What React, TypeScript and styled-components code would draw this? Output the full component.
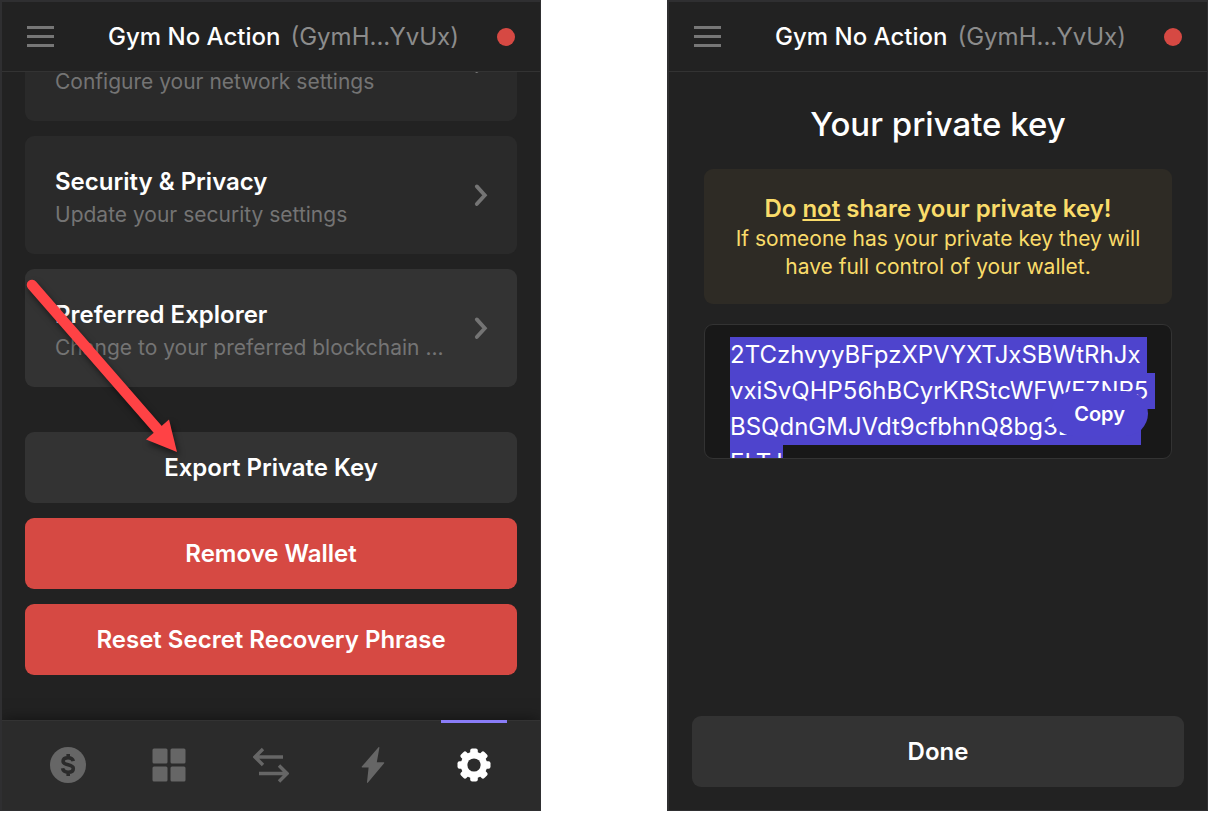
import React, { useEffect, useRef } from "react";
import styled, { createGlobalStyle } from "styled-components";

const GlobalStyle = createGlobalStyle`
  * { box-sizing: border-box; }
  body {
    margin: 0;
    background: #fff;
    color: #fff;
    font-family: Inter, "Liberation Sans", sans-serif;
  }
  h1, h2, p { margin: 0; }
  button { font-family: inherit; color: inherit; border: 0; cursor: pointer; }
`;

const Page = styled.main`
  display: grid;
  grid-template-columns: 1fr 1fr;
  gap: 126px;
  height: 100vh;
  min-height: 640px;
  padding: 0 7px 2px 0;
`;

const Panel = styled.section`
  position: relative;
  display: flex;
  flex-direction: column;
  min-width: 0;
  min-height: 0;
  overflow: hidden;
  background: #222;
  border: solid #2f2f31;
  border-width: 2px 1px 1px 2px;
`;

const Header = styled.header`
  display: flex;
  align-items: center;
  justify-content: space-between;
  flex: none;
  height: 70px;
  padding: 0 25px;
  border-bottom: 1px solid #333;
`;

const MenuButton = styled.button`
  display: flex;
  padding: 0;
  background: none;
  color: #777;
`;

const Account = styled.h1`
  display: flex;
  gap: 10px;
  padding-left: 16px;
  font-size: 24px;
  line-height: 30px;
  font-weight: 500;
  white-space: nowrap;
`;

const Address = styled.span`
  color: #8c8c8c;
  font-weight: 400;
`;

const StatusDot = styled.span`
  width: 18px;
  height: 18px;
  border-radius: 50%;
  background: #d64943;
`;

const Settings = styled.div`
  display: flex;
  flex-direction: column;
  justify-content: flex-end;
  gap: 15px;
  flex: 1;
  min-height: 0;
  padding: 0 23px 45px;
  overflow: hidden;
`;

const Card = styled.button<{ $active?: boolean }>`
  display: flex;
  align-items: center;
  justify-content: space-between;
  flex: none;
  height: 118px;
  padding: 0 28px 0 30px;
  border-radius: 9px;
  background: ${(p) => (p.$active ? "#333" : "#2a2a2a")};
  color: #747474;
  text-align: left;
`;

const CardText = styled.span`
  display: flex;
  flex-direction: column;
  gap: 4px;
  min-width: 0;
  padding-top: 5px;
`;

const CardTitle = styled.span`
  min-height: 30px;
  color: #fff;
  font-size: 24px;
  line-height: 30px;
  font-weight: 600;
`;

const CardNote = styled.span`
  font-size: 21px;
  line-height: 28px;
  font-weight: 400;
  white-space: nowrap;
`;

const Actions = styled.div`
  display: flex;
  flex-direction: column;
  gap: 15px;
  padding-top: 30px;
`;

const ActionButton = styled.button<{ $danger?: boolean }>`
  flex: none;
  height: 71px;
  padding: 0 20px;
  border-radius: 9px;
  background: ${(p) => (p.$danger ? "#d64943" : "#333")};
  font-size: 24px;
  line-height: 30px;
  font-weight: 600;
`;

const Nav = styled.nav`
  display: grid;
  grid-template-columns: repeat(5, 1fr);
  flex: none;
  height: 90px;
  padding: 0 15px;
  background: #2b2b2b;
  border-top: 1px solid #333;
  box-shadow: 0 0 15px rgba(0, 0, 0, 0.5);
`;

const NavButton = styled.button<{ $active?: boolean }>`
  position: relative;
  display: flex;
  align-items: center;
  justify-content: center;
  padding: 0 0 2px;
  background: none;
  color: ${(p) => (p.$active ? "#fff" : "#666")};
`;

const NavMarker = styled.span`
  position: absolute;
  top: -1px;
  left: 18px;
  right: 18px;
  height: 3px;
  background: #8a7df8;
`;

const Pointer = styled.svg`
  position: absolute;
  left: 18px;
  top: 268px;
  overflow: visible;
  pointer-events: none;
  filter: drop-shadow(2px 4px 3px rgba(0, 0, 0, 0.5));
`;

const KeyView = styled.div`
  display: flex;
  flex-direction: column;
  flex: 1;
  padding: 30px 23px 23px;
`;

const KeyContent = styled.div`
  display: flex;
  flex-direction: column;
  flex: 1;
  gap: 20px;
  padding: 0 12px;
`;

const Title = styled.h2`
  padding-bottom: 3px;
  font-size: 33px;
  line-height: 44px;
  font-weight: 500;
  text-align: center;
`;

const Warning = styled.div`
  padding: 25px 20px 23px;
  border-radius: 9px;
  background: #2e2b25;
  color: #fadc6a;
  text-align: center;
`;

const WarningTitle = styled.p`
  padding-bottom: 1px;
  font-size: 24px;
  line-height: 30px;
  font-weight: 600;
`;

const WarningText = styled.p`
  font-size: 21px;
  line-height: 28px;
`;

const KeyBox = styled.div`
  position: relative;
  display: flex;
`;

const KeyField = styled.textarea`
  flex: 1;
  min-width: 0;
  height: 135px;
  padding: 12px 19px 0 25px;
  border: 1px solid #333;
  border-radius: 9px;
  outline: none;
  resize: none;
  overflow: hidden;
  background: #181818;
  color: #fff;
  font-family: inherit;
  font-size: 24px;
  line-height: 36px;
  white-space: pre;

  &::selection {
    background: rgba(78, 68, 206, 0.996);
    color: #fff;
  }
`;

const CopyButton = styled.button`
  position: absolute;
  right: 24px;
  bottom: 23px;
  height: 45px;
  padding: 0 23px;
  border-radius: 23px;
  background: #4e44ce;
  font-size: 20px;
  line-height: 24px;
  font-weight: 600;
`;

const PRIVATE_KEY = [
  "2TCzhvyyBFpzXPVYXTJxSBWtRhJx",
  "vxiSvQHP56hBCyrKRStcWFWFZNP5",
  "BSQdnGMJVdt9cfbhnQ8bg3LCvdG",
  "ELTJ",
].join("\n");

const Chevron = () => (
  <svg
    width="16"
    height="24"
    viewBox="0 0 16 24"
    fill="none"
    stroke="currentColor"
    strokeWidth="3.800"
    strokeLinecap="round"
    aria-hidden="true"
  >
    <path d="M3.800 3.400l8 8.800-8 8.800" />
  </svg>
);

const DollarIcon = () => (
  <svg width="36" height="36" viewBox="0 0 36 36" aria-hidden="true">
    <circle cx="18" cy="18" r="18" fill="currentColor" />
    <path
      d="M23.300 14.200c-.5-2.200-2.400-3.400-5.200-3.400-3 0-5 1.400-5 3.500 0 4.700 10.200 2.400 10.200 7.200 0 2.300-2.100 3.700-5.100 3.700-3.300 0-5.200-1.400-5.600-3.900M18.200 7v4M18.200 25v4"
      fill="none"
      stroke="#2b2b2b"
      strokeWidth="3.600"
    />
  </svg>
);

const GridIcon = () => (
  <svg width="34" height="34" viewBox="0 0 34 34" fill="currentColor" aria-hidden="true">
    <rect x="0.500" y="0.500" width="15" height="15" rx="1.500" />
    <rect x="18.500" y="0.500" width="15" height="15" rx="1.500" />
    <rect x="0.500" y="18.500" width="15" height="15" rx="1.500" />
    <rect x="18.500" y="18.500" width="15" height="15" rx="1.500" />
  </svg>
);

const SwapIcon = () => (
  <svg width="36" height="36" viewBox="0 0 36 36" fill="none" stroke="currentColor" strokeWidth="3.400" aria-hidden="true">
    <path d="M30 10H2.500M10 2L2 10l8 8M6 26.500h27.500M26 18.500l8 8-8 8" />
  </svg>
);

const BoltIcon = () => (
  <svg width="24" height="36" viewBox="0 0 24 36" fill="currentColor" aria-hidden="true">
    <path d="M17.500 0.300c.4-.5 1-.2.9.4L15.800 15.300h6.900c.6 0 .8.500.4 1L7 35.600c-.5.600-1.100.3-1-.4L7.600 20.600H1.200c-.6 0-.8-.5-.4-1z" />
  </svg>
);

const GearIcon = () => (
  <svg width="34" height="34" viewBox="-17 -17 34 34" fill="currentColor" aria-hidden="true">
    <mask id="gear-hole">
      <rect x="-17" y="-17" width="34" height="34" fill="#fff" />
      <circle r="6.600" fill="#000" />
    </mask>
    <g mask="url(#gear-hole)">
      <circle r="13.200" />
      {[0, 45, 90, 135].map((angle) => (
        <rect key={angle} x="-3.800" y="-16.500" width="7.600" height="33" rx="2" transform={`rotate(${angle})`} />
      ))}
    </g>
  </svg>
);

const AppHeader = () => (
  <Header>
    <MenuButton aria-label="Menu">
      <svg width="27" height="21" viewBox="0 0 27 21" fill="currentColor" aria-hidden="true">
        <path d="M0 0h27v3H0zM0 9h27v3H0zM0 18h27v3H0z" />
      </svg>
    </MenuButton>
    <Account>
      Gym No Action <Address>(GymH...YvUx)</Address>
    </Account>
    <StatusDot />
  </Header>
);

const SettingCard = ({ title, note, active }: { title?: string; note: string; active?: boolean }) => (
  <Card $active={active}>
    <CardText>
      <CardTitle>{title}</CardTitle>
      <CardNote>{note}</CardNote>
    </CardText>
    <Chevron />
  </Card>
);

const tabs = [
  { label: "Wallet", Icon: DollarIcon },
  { label: "Collectibles", Icon: GridIcon },
  { label: "Swap", Icon: SwapIcon },
  { label: "Activity", Icon: BoltIcon },
  { label: "Settings", Icon: GearIcon, active: true },
];

export default function App() {
  const keyRef = useRef<HTMLTextAreaElement>(null);

  useEffect(() => {
    keyRef.current?.focus({ preventScroll: true });
    keyRef.current?.select();
  }, []);

  return (
    <>
      <GlobalStyle />
      <Page>
        <Panel>
          <AppHeader />
          <Settings>
            <SettingCard note="Configure your network settings" />
            <SettingCard title="Security & Privacy" note="Update your security settings" />
            <SettingCard title="Preferred Explorer" note="Change to your preferred blockchain ..." active />
            <Actions>
              <ActionButton>Export Private Key</ActionButton>
              <ActionButton $danger>Remove Wallet</ActionButton>
              <ActionButton $danger>Reset Secret Recovery Phrase</ActionButton>
            </Actions>
          </Settings>
          <Nav>
            {tabs.map(({ label, Icon, active }) => (
              <NavButton key={label} aria-label={label} $active={active}>
                {active && <NavMarker />}
                <Icon />
              </NavButton>
            ))}
          </Nav>
          <Pointer width="166" height="190" viewBox="20 270 166 190" aria-hidden="true">
            <path d="M32 285L160 432" stroke="#ff4245" strokeWidth="10.500" strokeLinecap="round" />
            <path d="M177 452L169 419.500 146 439.500z" fill="#ff4245" />
          </Pointer>
        </Panel>
        <Panel>
          <AppHeader />
          <KeyView>
            <KeyContent>
              <Title>Your private key</Title>
              <Warning>
                <WarningTitle>
                  Do <u>not</u> share your private key!
                </WarningTitle>
                <WarningText>
                  If someone has your private key they will have full control of your wallet.
                </WarningText>
              </Warning>
              <KeyBox>
                <KeyField ref={keyRef} aria-label="Private key" readOnly defaultValue={PRIVATE_KEY} />
                <CopyButton>Copy</CopyButton>
              </KeyBox>
            </KeyContent>
            <ActionButton>Done</ActionButton>
          </KeyView>
        </Panel>
      </Page>
    </>
  );
}
